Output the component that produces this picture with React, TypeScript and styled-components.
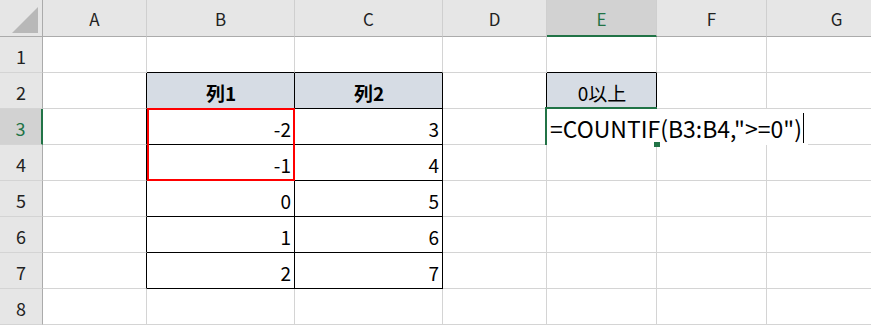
import React from 'react';
import styled, { createGlobalStyle } from 'styled-components';

const GREEN = '#217346';
const GRID = '#d4d4d4';
const HEAD_LINE = '#ababab';
const TABLE_FILL = '#d6dce4';

const GlobalStyle = createGlobalStyle`
  html, body {
    margin: 0;
    padding: 0;
    background: #fff;
  }
  body {
    font-family: "Noto Sans CJK JP", "Noto Sans", sans-serif;
    overflow: hidden;
  }
`;

const COLS = ['A', 'B', 'C', 'D', 'E', 'F', 'G'];
const COL_WIDTHS = [104, 148, 148, 104, 110, 110, 140];
const ROW_COUNT = 8;

type CellData = { value: string; align?: 'left' | 'center' | 'right'; bold?: boolean; fill?: string };

// sheet contents keyed by address
const cells: Record<string, CellData> = {
  B2: { value: '列1', align: 'center', bold: true, fill: TABLE_FILL },
  C2: { value: '列2', align: 'center', bold: true, fill: TABLE_FILL },
  B3: { value: '-2', align: 'right' },
  C3: { value: '3', align: 'right' },
  B4: { value: '-1', align: 'right' },
  C4: { value: '4', align: 'right' },
  B5: { value: '0', align: 'right' },
  C5: { value: '5', align: 'right' },
  B6: { value: '1', align: 'right' },
  C6: { value: '6', align: 'right' },
  B7: { value: '2', align: 'right' },
  C7: { value: '7', align: 'right' },
  E2: { value: '0以上', align: 'center', fill: TABLE_FILL },
};

// ranges drawn with thin black borders: [col0, row0, col1, row1] (0-based col, 1-based row)
const bordered: [number, number, number, number][] = [
  [1, 2, 2, 7],
  [4, 2, 4, 2],
];

const inBorder = (c: number, r: number) =>
  bordered.some(([c0, r0, c1, r1]) => c >= c0 && c <= c1 && r >= r0 && r <= r1);

const activeCol = 4;
const activeRow = 3;

const Sheet = styled.div`
  display: grid;
  grid-template-columns: 43px ${COL_WIDTHS.map((w) => `${w}px`).join(' ')};
  grid-template-rows: 37px repeat(${ROW_COUNT}, 36px);
  width: 871px;
  height: 325px;
  overflow: hidden;
  background: #fff;
`;

const Corner = styled.div`
  grid-column: 1;
  grid-row: 1;
  position: relative;
  background: #e6e6e6;
  border-right: 1px solid ${HEAD_LINE};
  border-bottom: 1px solid ${HEAD_LINE};

  &::after {
    content: '';
    position: absolute;
    right: 4px;
    bottom: 3px;
    width: 26px;
    height: 26px;
    background: #b8b8b8;
    clip-path: polygon(100% 0, 100% 100%, 0 100%);
  }
`;

const ColHeader = styled.div<{ $col: number; $active?: boolean }>`
  grid-column: ${(p) => p.$col + 2};
  grid-row: 1;
  display: flex;
  align-items: center;
  justify-content: center;
  padding-top: 1px;
  background: ${(p) => (p.$active ? '#d2d2d2' : '#e6e6e6')};
  color: ${(p) => (p.$active ? GREEN : '#222')};
  border-right: 1px solid #cfcfcf;
  border-bottom: ${(p) => (p.$active ? `2px solid ${GREEN}` : `1px solid ${HEAD_LINE}`)};
  font-size: 17px;
`;

const RowHeader = styled.div<{ $row: number; $active?: boolean }>`
  grid-column: 1;
  grid-row: ${(p) => p.$row + 1};
  display: flex;
  align-items: center;
  justify-content: center;
  padding-top: 2px;
  background: ${(p) => (p.$active ? '#d2d2d2' : '#e6e6e6')};
  color: ${(p) => (p.$active ? GREEN : '#222')};
  border-right: ${(p) => (p.$active ? `2px solid ${GREEN}` : `1px solid ${HEAD_LINE}`)};
  border-bottom: 1px solid ${GRID};
  font-size: 18px;
`;

const Cell = styled.div<{
  $col: number;
  $row: number;
  $right: string;
  $bottom: string;
  $fill?: string;
  $align?: string;
  $bold?: boolean;
}>`
  grid-column: ${(p) => p.$col + 2};
  grid-row: ${(p) => p.$row + 1};
  display: flex;
  align-items: center;
  justify-content: ${(p) =>
    p.$align === 'right' ? 'flex-end' : p.$align === 'center' ? 'center' : 'flex-start'};
  padding: 3px 3px 0 4px;
  background: ${(p) => p.$fill || '#fff'};
  border-right: 1px solid ${(p) => p.$right};
  border-bottom: 1px solid ${(p) => p.$bottom};
  font-size: 19px;
  font-weight: ${(p) => (p.$bold ? 700 : 400)};
  color: #000;
  white-space: nowrap;
`;

// coloured outline around the range referenced by the formula
const RangeMark = styled.div`
  grid-column: 3;
  grid-row: 4 / span 2;
  margin-top: -1px;
  border: 2px solid #ff0000;
  z-index: 2;
  pointer-events: none;
`;

const EditBox = styled.div`
  grid-column: ${activeCol + 2};
  grid-row: ${activeRow + 1};
  margin: -2px 0 0 -2px;
  position: relative;
  display: flex;
  border-top: 2px solid ${GREEN};
  border-left: 2px solid ${GREEN};
  border-bottom: 2px solid ${GREEN};
  z-index: 3;

  &::after {
    content: '';
    position: absolute;
    right: -3px;
    bottom: -4px;
    width: 6px;
    height: 5px;
    background: ${GREEN};
  }
`;

const EditText = styled.span`
  display: flex;
  align-items: center;
  height: 100%;
  padding: 2px 4px 0 3px;
  background: #fff;
  font-size: 23px;
  color: #000;
  white-space: nowrap;
`;

const Caret = styled.span`
  display: inline-block;
  width: 1px;
  height: 30px;
  margin-left: 1px;
  background: #000;
`;

export default function App() {
  const body: React.ReactNode[] = [];
  for (let r = 1; r <= ROW_COUNT; r++) {
    body.push(<RowHeader key={`rh${r}`} $row={r} $active={r === activeRow}>{r}</RowHeader>);
    COLS.forEach((col, c) => {
      const data = cells[`${col}${r}`];
      const self = inBorder(c, r);
      const right = self || inBorder(c + 1, r) ? '#000' : GRID;
      const bottom = self || inBorder(c, r + 1) ? '#000' : GRID;
      body.push(
        <Cell
          key={`${col}${r}`}
          $col={c}
          $row={r}
          $right={right}
          $bottom={bottom}
          $fill={data?.fill}
          $align={data?.align}
          $bold={data?.bold}
        >
          {data?.value}
        </Cell>
      );
    });
  }

  return (
    <>
      <GlobalStyle />
      <Sheet>
        <Corner />
        {COLS.map((col, c) => (
          <ColHeader key={col} $col={c} $active={c === activeCol}>
            {col}
          </ColHeader>
        ))}
        {body}
        <RangeMark />
        <EditBox>
          <EditText>
            =COUNTIF(B3:B4,"&gt;=0")
            <Caret />
          </EditText>
        </EditBox>
      </Sheet>
    </>
  );
}
